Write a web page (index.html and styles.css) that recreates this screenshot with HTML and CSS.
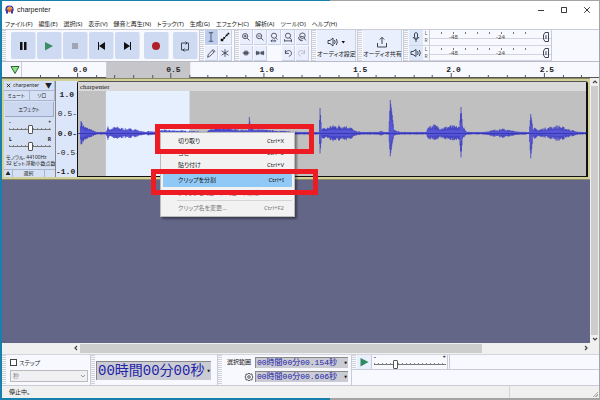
FILE: index.html
```html
<!DOCTYPE html>
<html lang="ja">
<head>
<meta charset="utf-8">
<title>charpenter</title>
<link rel="stylesheet" href="styles.css">
</head>
<body>
<div class="window">
  <header class="titlebar">
    <svg class="logo" viewBox="0 0 18 18"><circle cx="9" cy="9" r="6" fill="#f0a030"/><path d="M2 12V9a7 7 0 0 1 14 0v3" fill="none" stroke="#2a2ab0" stroke-width="2.4"/><path d="M2 9h4v8H2zM12 9h4v8h-4z" fill="#3038c0"/><path d="M5 12l2-3 2 5 2-5 2 3" fill="none" stroke="#e03020" stroke-width="1.6"/></svg>
    <h1 class="title">charpenter</h1>
    <div class="caption">
      <button aria-label="最小化"><svg viewBox="0 0 8 8"><path d="M1 4.5h6"/></svg></button>
      <button aria-label="最大化"><svg viewBox="0 0 8 8"><path d="M1.5 1.5h5v5h-5z"/></svg></button>
      <button aria-label="閉じる"><svg viewBox="0 0 8 8"><path d="M1.2 1.2l5.6 5.6M6.8 1.2L1.2 6.8"/></svg></button>
    </div>
  </header>

  <nav class="menubar">
    <button>ファイル(F)</button><button>編集(E)</button><button>選択(S)</button><button>表示(V)</button><button>録音と再生(N)</button><button>トラック(T)</button><button>生成(G)</button><button>エフェクト(C)</button><button>解析(A)</button><button>ツール(O)</button><button>ヘルプ(H)</button>
  </nav>

  <div class="toolbar">
    <div class="group transport">
      <button aria-label="一時停止"><svg viewBox="0 0 24 26"><path d="M9 9h2.5v8H9zM13 9h2.5v8H13z"/></svg></button>
      <button aria-label="再生"><svg viewBox="0 0 24 26"><path d="M8 9l8 4-8 4.500z" fill="#3d8c68"/></svg></button>
      <button aria-label="停止"><svg viewBox="0 0 24 26"><path d="M9 10h6v6H9z" fill="#a3a5b4"/></svg></button>
      <button aria-label="先頭へ"><svg viewBox="0 0 24 26"><path d="M9 9h1v8H9zM16 9v8l-6-4z"/></svg></button>
      <button aria-label="末尾へ"><svg viewBox="0 0 24 26"><path d="M15 9h1v8h-1zM9 9v8l6-4z"/></svg></button>
      <button class="record" aria-label="録音"><svg viewBox="0 0 24 26"><circle cx="12" cy="13" r="4" fill="#b0202c"/></svg></button>
      <button class="loop" aria-label="ループ"><svg viewBox="0 0 24 26"><path d="M11 17H8.500v-7H14M12.500 8.500L14 10l-1.500 1.500M13 10h2.500v7H10M11.500 15.500L10 17l1.500 1.500" fill="none" stroke="#333848" stroke-width=".9"/></svg></button>
    </div>
    <div class="group tools">
      <button class="on" aria-label="選択ツール"><svg viewBox="0 0 14 14"><path d="M4.500 2h5M7 2v10M4.500 12h5"/></svg></button>
      <button aria-label="エンベロープ"><svg viewBox="0 0 14 14"><path d="M3 10.500l3-1.500 2.500-4L11 3" stroke-width="1"/><path d="M2 9h3v3H2zM5 7h2v2H5zM8 4h2v2H8zM10 2h2v2h-2z" fill="#111" stroke="none"/></svg></button>
      <button aria-label="描画"><svg viewBox="0 0 14 14"><path d="M3 12l1-3.500L9.500 3l2 2L6 10.500zM8.500 4l2 2"/></svg></button>
      <button aria-label="マルチツール"><svg viewBox="0 0 14 14"><path d="M7 2.500v9M3 4.500l8 5M11 4.500l-8 5"/></svg></button>
    </div>
    <div class="group edit">
      <button aria-label="拡大"><svg viewBox="0 0 14 14"><circle cx="6" cy="6" r="3"/><path d="M8.300 8.300L11 11M4.500 6h3M6 4.500v3"/></svg></button>
      <button aria-label="縮小"><svg viewBox="0 0 14 14"><circle cx="6" cy="6" r="3"/><path d="M8.300 8.300L11 11M4.500 6h3"/></svg></button>
      <button aria-label="選択範囲に合わせる"><svg viewBox="0 0 14 14"><circle cx="7" cy="5.500" r="3"/><path d="M9 8l2 2M3.500 11.500h5M5 10l-1.500 1.500L5 13M7.500 10L9 11.500 7.500 13"/></svg></button>
      <button aria-label="全体を表示"><svg viewBox="0 0 14 14"><circle cx="7" cy="5.500" r="3"/><path d="M9 8l2 2M3 11.500h8M3 9.500v3M11 10v3"/></svg></button>
      <button aria-label="ズーム切替"><svg viewBox="0 0 14 14"><circle cx="7.500" cy="5.500" r="3.200"/><path d="M9.500 8l2 3M5 6.500h4M3 9l3 3M3 7c0 3 2 4 5 4"/></svg></button>
      <button aria-label="トリム"><svg viewBox="0 0 14 14"><path d="M3 7h8M5 5v4M6 4v6M7 5v4M8 4v6M9 5v4"/></svg></button>
      <button aria-label="無音化"><svg viewBox="0 0 14 14"><path d="M3 4.500v5M4.200 5v4M2 7h10M9.800 5v4M11 4.500v5M5.500 5v4M8.500 5v4"/></svg></button>
      <span class="blank"></span>
      <button aria-label="元に戻す"><svg viewBox="0 0 14 14"><path d="M4 3.500v4h4M4 7.500c1-5 8-4 7 .5-.3 1.500-1.500 2.500-3 2.800"/></svg></button>
      <button class="off" aria-label="やり直す"><svg viewBox="0 0 14 14"><path d="M10 3.500v4H6M10 7.500c-1-5-8-4-7 .5.300 1.500 1.500 2.500 3 2.800"/></svg></button>
    </div>
    <div class="group big">
      <button><svg viewBox="0 0 20 12"><path d="M2 4.500h2L7 2v8L4 7.500H2zM8.500 4q1.300 2 0 4M10.300 3q2 3 0 6"/><path d="M15.500 5h3.500l-1.700 2.500z" fill="#111" stroke="none"/></svg><span>オーディオ設定</span></button>
    </div>
    <div class="group big">
      <button><svg viewBox="0 0 20 12"><path d="M10 8V1.500M7.800 3.500L10 1.300l2.200 2.200M5.500 7v4h9V7"/></svg><span>オーディオ共有</span></button>
    </div>
    <div class="group meters">
      <div class="meter"><button aria-label="録音メーター"><svg viewBox="0 0 14 14"><path d="M5.500 3.500q1.500-2 3 0v4q-1.500 2-3 0zM4 7q3 5 6 0M7 9.500V12"/></svg></button><span class="lr"><i>L</i><i>R</i></span>
        <div class="scale"><span>-48</span><span>-24</span><svg viewBox="0 0 8 12"><path d="M3 1.500h3.500v9H3L1.500 8V4zM4 4v4"/></svg></div></div>
      <div class="meter"><button aria-label="再生メーター"><svg viewBox="0 0 14 14"><path d="M2 5.500h2L7 3.500v7L4 8.500H2zM8.500 5q1.300 2 0 4M10.300 4q2 3 0 6"/></svg></button><span class="lr"><i>L</i><i>R</i></span>
        <div class="scale"><span>-48</span><span>-24</span><svg viewBox="0 0 8 12"><path d="M3 1.500h3.500v9H3L1.500 8V4zM4 4v4"/></svg></div></div>
    </div>
  </div>

  <div class="ruler">
    <button class="pin" aria-label="再生ヘッド固定"><svg viewBox="0 0 10 10"><path d="M1 1.500h8L5 8.500z" fill="#8fe08a" stroke="#2c6a38"/></svg></button>
    <svg class="ruler-scale" id="ruler" viewBox="0 0 576 16" preserveAspectRatio="xMinYMin slice" role="img"></svg>
  </div>

  <main class="workspace">
    <div class="tracks">
      <section class="track">
        <div class="panel">
          <div class="row head"><button aria-label="閉じる"><svg viewBox="0 0 6 6"><path d="M1 1l4 4M5 1L1 5"/></svg></button><button class="name"><span>charpenter</span><b>▼</b></button></div>
          <div class="row"><button>ミュート</button><button>ソロ</button></div>
          <button class="effects">エフェクト</button>
          <label class="knob"><span><i>-</i><i>+</i></span><input type="range" aria-label="ゲイン"></label>
          <label class="knob"><span><i>L</i><i>R</i></span><input type="range" aria-label="パン"></label>
          <p>モノラル, 44100Hz<br>32 ビット浮動小数点数</p>
          <div class="row foot"><button aria-label="折りたたむ">▲</button><button>選択</button></div>
        </div>
        <div class="vscale"><b>1.0</b><span>0.5-</span><b>0.0-</b><span>-0.5-</span><b>-1.0</b></div>
        <div class="clip">
          <div class="clip-name">charpenter</div>
          <svg id="wave" viewBox="0 0 510 85" preserveAspectRatio="none" role="img" aria-label="波形"></svg>
        </div>
      </section>
    </div>
    <div class="vbar"><svg viewBox="0 0 8 8"><path d="M2 5l2-2 2 2"/></svg><div class="thumb"></div><svg viewBox="0 0 8 8"><path d="M2 3l2 2 2-2"/></svg></div>
  </main>
  <div class="hbar"><svg viewBox="0 0 8 8"><path d="M5 2L3 4l2 2"/></svg><div class="lane"><div class="thumb"></div></div><svg viewBox="0 0 8 8"><path d="M3 2l2 2-2 2"/></svg></div>

  <footer class="bottom">
    <div class="group step">
      <label><input type="checkbox">ステップ</label>
      <div class="unit"><select aria-label="単位" disabled><option>秒</option></select><svg viewBox="0 0 8 8"><path d="M2 3l2 2 2-2"/></svg></div>
    </div>
    <div class="group clock"><div class="time large"><span>00時間00分00秒</span><button aria-label="書式">▾</button></div></div>
    <div class="group range">
      <span class="range-label">選択範囲</span>
      <div class="time"><span>00時間00分00.154秒</span><button aria-label="書式">▾</button></div>
      <button class="gear" aria-label="設定"><svg viewBox="0 0 10 10"><path d="M5 1l1.200 1.200 1.800-.2.200 1.800L9 5l-.8 1.200L8 8l-1.800-.2L5 9 3.800 7.800 2 8l-.2-1.800L1 5l.8-1.200L2 2l1.800.2z"/><circle cx="5" cy="5" r="1.300"/></svg></button>
      <div class="time"><span>00時間00分00.606秒</span><button aria-label="書式">▾</button></div>
    </div>
    <div class="rest">
      <div class="group speed">
        <button aria-label="指定速度で再生"><svg viewBox="0 0 14 14"><path d="M3.500 3l8 4-8 4.500z" fill="#2f8a62"/></svg></button>
        <label class="knob"><span><i>-</i><i>+</i></span><input type="range" value="29" aria-label="再生速度"></label>
      </div>
      <div class="group filler"></div>
    </div>
  </footer>
  <div class="status"><span>停止中。</span><span></span><span class="grip"></span></div>

  <div class="context" role="menu">
    <button role="menuitem"><span>切り取り</span><span>Ctrl+X</span></button>
    <button role="menuitem"><span>コピー</span><span>Ctrl+C</span></button>
    <button role="menuitem"><span>貼り付け</span><span>Ctrl+V</span></button>
    <hr>
    <button role="menuitem" class="active"><span>クリップを分割</span><span>Ctrl+I</span></button>
    <button role="menuitem" class="red"><span>クリップをミュート/ミュート解除</span><span>Ctrl+F1</span></button>
    <hr>
    <button role="menuitem" disabled><span>クリップ名を変更...</span><span>Ctrl+F2</span></button>
  </div>
  <div class="mark mark-cut"></div>
  <div class="mark mark-split"></div>
</div>
<script src="script.js"></script>
</body>
</html>
```
FILE: styles.css
```css
* { box-sizing: border-box; }
body { margin: 0; font: 6px/10px "Noto Sans", "Noto Sans CJK JP", sans-serif; color: #222; font-feature-settings: "palt"; }
button, select, input { font: inherit; color: inherit; margin: 0; padding: 0; border: 0; background: none; font-feature-settings: inherit; }
button { display: block; white-space: nowrap; }
i { font-style: normal; }
svg { display: block; }
.window { position: relative; height: 100vh; display: flex; flex-direction: column; padding: 1px 1px 2px 2px; background: linear-gradient(90deg, #1880ac 0 55%, #a2a4a6 55%); overflow: hidden; }

.titlebar { display: flex; align-items: center; height: 17px; padding-left: 3px; gap: 3px; flex: none; background: #fff; }
.logo { width: 9px; height: 9px; }
.title { flex: 1; margin: 0; font: 7px/10px "Liberation Sans", sans-serif; }
.caption { display: flex; gap: 15px; padding-right: 8px; }
.caption svg { width: 8px; height: 8px; fill: none; stroke: #222; stroke-width: .9; }
.menubar { display: flex; gap: 6px; height: 11px; padding-left: 3px; flex: none; background: #fff; }

.toolbar { display: flex; height: 33px; flex: none; background: #f8f9fe; border-top: 1px solid #c9ccd6; border-bottom: 1px solid #b9bcc8; }
.group { display: flex; padding-left: 7px; border-right: 1px solid #c9ccd6; background: linear-gradient(#f8f9fe, #f8f9fe) 4px 0 no-repeat, repeating-linear-gradient(#d0d2da 0 1px, #f8f9fe 1px 2px); }
.toolbar svg { fill: none; stroke: #2c3144; stroke-width: .9; }
.transport { align-items: center; gap: 1px; padding: 0 1px 0 9px; }
.transport button { width: 25px; height: 27px; background: #cedaf1; border-radius: 2px; border-right: 1px solid #e2e8f6; }
.toolbar .transport svg { width: 24px; height: 26px; fill: #111; stroke: none; }
.transport .record, .transport .loop { margin-left: 3px; }
.tools, .edit { display: grid; gap: 1px; padding-right: 2px; align-content: center; }
.tools { grid-template-columns: repeat(2, 13px); padding-left: 5px; }
.edit { grid-template-columns: repeat(5, 13px); padding-left: 5px; }
.tools button, .edit button { height: 15px; background: #e9effc; border: 1px solid #c9d0e4; border-width: 0 1px 1px 0; }
.tools svg, .edit svg { width: 12px; height: 14px; }
.toolbar .tools .on { background: #bccdee; }
.edit .off svg { opacity: .3; }
.big { padding: 0 1px 0 5px; }
.big button { width: 39px; background: #e9effc; border-right: 1px solid #c9d0e4; }
.big svg { width: 20px; height: 12px; margin: 3px auto 1px; }
.meters { flex-direction: column; padding-left: 5px; }
.meter { display: flex; height: 16px; border-bottom: 1px solid #d2d5df; }
.meter button { width: 14px; background: #dde7fa; }
.meter svg { width: 14px; height: 14px; }
.lr { width: 6px; display: grid; font-size: 5px; line-height: 7px; text-align: center; color: #555; }
.scale { width: 122px; display: flex; padding: 1px 1px 0 0; line-height: 13px; border-left: 1px solid #c9ccd6; color: #444; background: repeating-linear-gradient(90deg, #777 0 1px, transparent 1px 12px) 11px 2px / 96px 2px no-repeat, linear-gradient(#d2d5df, #d2d5df) 0 8px / 100% 1px no-repeat; }
.scale span { width: 47px; text-align: center; }
.meter .scale svg { width: 8px; height: 12px; margin-left: auto; }

.ruler { display: flex; height: 16px; flex: none; background: #f8f9fe; border-bottom: 1px solid #555; }
.pin { width: 20px; padding-left: 8px; border-right: 1px solid #ccc; }
.pin svg { width: 10px; height: 10px; }
.ruler-scale { flex: 1; height: 16px; min-width: 0; font: bold 8px "Liberation Mono", monospace; }

.workspace { flex: 1; display: flex; min-height: 0; background: #646688; }
.tracks { flex: 1; min-width: 0; }
.track { display: flex; height: 102px; padding: 2px; background: #d3d19a; border: 1px solid #8a8b66; border-width: 1px 0; }
.panel { width: 51px; background: #d5e0f5; font-size: 5px; line-height: 7px; overflow: hidden; display: flex; flex-direction: column; }
.row { display: flex; height: 10px; border-bottom: 1px solid #aab6d0; }
.row button { flex: 1; border-right: 1px solid #aab6d0; }
.head button:first-child { flex: none; width: 9px; padding-left: 2px; border: 0; }
.head svg { width: 5px; height: 5px; stroke: #111; }
.row .name { display: flex; align-items: center; justify-content: space-between; padding-right: 2px; }
.name b { font-size: 7px; }
.effects { height: 15px; margin: 1px 1px 3px; background: #cbd8f0; border: 1px solid #9ba8c6; border-width: 0 1px 1px 0; }
.knob { display: block; }
.panel .knob { width: 42px; height: 17px; margin: 0 5px; }
.knob span { display: flex; justify-content: space-between; height: 5px; line-height: 5px; font-weight: 700; }
input[type=range] { appearance: none; display: block; width: 100%; height: 9px; background: linear-gradient(#777, #777) 0 4px / 100% 1px no-repeat, repeating-linear-gradient(90deg, #888 0 1px, transparent 1px 4px) 0 3px / 100% 1px no-repeat; }
input[type=range]::-webkit-slider-thumb { appearance: none; width: 5px; height: 9px; border: 1px solid #555; border-radius: 1px; background: #fff; }
.panel p { margin: 0; padding-left: 2px; line-height: 6px; white-space: nowrap; }
.foot { margin-top: auto; border-top: 1px solid #aab6d0; border-bottom: 0; height: 8px; }
.foot button:first-child { flex: none; width: 9px; }
.foot button:last-child { margin-right: 10px; }
.vscale { width: 22px; display: flex; flex-direction: column; justify-content: space-between; padding: 9px 0 0; background: #dce6fa; border-left: 1px solid #888; font: 8px/10px "Liberation Mono", monospace; text-align: right; }
.vscale b:first-child, .vscale b:last-child { padding-right: 3px; }
.clip { flex: 1; min-width: 0; display: flex; flex-direction: column; background: #c0c0c0; border: 1px solid #111; border-width: 1px 2px 1px 1px; border-top-color: #555; border-radius: 3px 3px 0 0; }
.clip-name { height: 9px; padding-left: 2px; background: #d9d9d9; font: 7px/10px "Liberation Serif", serif; color: #111; }
#wave { width: 100%; flex: 1; min-height: 0; }
.vbar { width: 9px; display: flex; flex-direction: column; align-items: center; background: #f0f0f0; }
.vbar .thumb { flex: 1; width: 7px; background: #cdcdcd; }
.vbar svg, .hbar svg { width: 8px; height: 8px; fill: none; stroke: #444; stroke-width: 1.2; }
.hbar { display: flex; height: 11px; flex: none; background: #f0f0f0; padding: 1px 9px 1px 70px; }
.lane { flex: 1; display: flex; }
.hbar .thumb { width: 80%; background: #cdcdcd; }

.bottom { display: flex; height: 31px; flex: none; background: #f8f9fe; border-top: 1px solid #d2d5df; }
.step { width: 89px; flex-direction: column; gap: 3px; padding: 3px 3px 0 8px; }
.step label { display: flex; align-items: center; gap: 2px; height: 9px; }
.step input { appearance: none; width: 7px; height: 7px; border: 1px solid #444; background: #fff; }
.unit { display: flex; align-items: center; width: 78px; height: 12px; border: 1px solid #bbb; background: #f0f0f2; }
.unit select { flex: 1; height: 10px; appearance: none; padding-left: 2px; color: #888; opacity: 1; }
.unit svg { width: 8px; height: 8px; fill: none; stroke: #999; }
.clock { width: 127px; padding: 6px 6px 6px 5px; }
.time { display: flex; align-items: center; justify-content: space-between; background: #cacbd3; border: 1px solid #8a8a8a; border-width: 1px 0 0 1px; color: #2224a8; font-family: "Liberation Mono", "Noto Sans CJK JP", monospace; font-size: 8px; line-height: 10px; padding-left: 1px; font-feature-settings: normal; white-space: nowrap; }
.time button { color: #111; width: 5px; font-size: 7px; }
.large { width: 116px; height: 19px; font-size: 14px; line-height: 18px; }
.range { width: 134px; display: grid; grid-template-columns: 27px 93px; grid-auto-rows: 11px; gap: 3px 1px; align-content: start; padding: 2px 2px 2px 9px; }
.range-label { line-height: 11px; white-space: nowrap; color: #111; }
.gear { justify-self: end; }
.gear svg { width: 10px; height: 10px; fill: none; stroke: #333; stroke-width: .8; }
.rest { flex: 1; display: flex; height: 15px; border-bottom: 1px solid #c9ccd6; }
.speed { width: 96px; padding-left: 5px; }
.speed button { width: 15px; background: #e9effc; border-right: 1px solid #c9ccd6; }
.speed svg { width: 14px; height: 14px; }
.speed .knob { width: 72px; margin-left: 2px; }
.filler { flex: 1; padding-left: 0; background: linear-gradient(#c9ccd6, #c9ccd6) 1px 0 / 1px 100% no-repeat; border-right: 0; }
.status { display: flex; height: 13px; flex: none; background: #f0f0f0; border-top: 1px solid #c9ccd6; line-height: 13px; }
.status span:first-child { width: 85%; padding-left: 7px; }
.status span:nth-child(2) { flex: 1; border-left: 1px solid #d5d5d5; }
.grip { width: 7px; margin: 5px 1px 0 0; height: 6px; background: linear-gradient(135deg, transparent 55%, #aaa 55% 65%, transparent 65% 75%, #aaa 75% 85%, transparent 85%); }

.context { position: absolute; left: 160px; top: 132px; width: 135px; padding: 2px; background: #f2f2f2; border: 1px solid #bbb; box-shadow: 2px 2px 2px rgba(0, 0, 0, .4); }
.context button { width: 100%; height: 12px; padding: 0 8px 0 15px; display: flex; justify-content: space-between; line-height: 12px; }
.context hr { margin: 1px 0 1px 14px; border: 0; border-top: 1px solid #d5d5d5; }
.context .active { background: #90c8f6; color: #111; height: 13px; }
.context .red { color: #a03038; }
.context :disabled { color: #777; }
.mark { position: absolute; border: 5px solid #ed1c24; }
.mark-cut { left: 155px; top: 124px; width: 159px; height: 30px; }
.mark-split { left: 151px; top: 169px; width: 167px; height: 26px; }
```
FILE: script.js
```js
const NS = "http://www.w3.org/2000/svg";
function add(parent, name, attrs, text) {
  const el = document.createElementNS(NS, name);
  for (const key in attrs) el.setAttribute(key, attrs[key]);
  if (text) el.textContent = text;
  parent.appendChild(el);
}

// Time ruler: half-second labels with five subdivisions each.
const ruler = document.getElementById("ruler");
const HALF = 93.2;
add(ruler, "rect", { x: 84, y: 0, width: 84, height: 16, fill: "#c6c6ca" });
for (let i = -3; i < 28; i++) {
  const x = Math.round(55 + i * HALF / 5) + 0.5;
  add(ruler, "path", { d: `M${x} ${i % 5 ? 13 : 11}V16`, stroke: "#555" });
}
for (let i = 0; i < 6; i++) {
  add(ruler, "text", { x: 58 + i * HALF, y: 10, "text-anchor": "middle", fill: "#222" }, (i / 2).toFixed(1));
}

// Waveform envelope: [position, height above, height below].
const env = [
  [2, 0, 0], [3, 12, 11], [4.5, 9, 10], [7, 6, 6], [12, 4, 4], [18, 1, 1], [28, 1, 1], [30, 6, 6], [32, 4, 3],
  [38, 6, 5], [48, 4, 4], [57, 4, 4], [62, 2, 2], [68, 1, 1], [71, 2, 2], [77, 1, 1], [84, 3, 2], [112, 2, 2],
  [127, 1, 1], [136, 4, 4], [147, 5, 4], [162, 3, 3], [171, 3, 3], [172, 16, 10], [173.5, 4, 4], [188, 3, 3],
  [204, 2, 2], [222, 1, 1], [242, 1, 1], [243, 25, 20], [244.5, 4, 5], [250, 5, 4], [254, 7, 7], [267, 7, 7],
  [273, 6, 6], [278, 2, 2], [285, 1, 1], [300, 1, 1], [304, 2, 2], [308, 1, 1], [312, 1, 1], [313.5, 33, 23],
  [315.5, 18, 10], [317, 3, 2], [325, 1, 1], [350, 1, 1], [351, 6, 6], [357, 8, 6], [365, 5, 5], [374, 7, 6],
  [383, 6, 6], [384.5, 26, 24], [386, 8, 6], [390, 1, 1], [408, 1, 1], [417, 3, 3], [427, 4, 4], [437, 2, 2],
  [447, 1, 1], [453, 1, 1], [454.5, 19, 25], [456.5, 6, 6], [461, 3, 3], [470, 5, 4], [482, 7, 7], [492, 4, 4],
  [502, 1, 1], [510, 1, 1]
];
function level(x, side) {
  for (let i = 1; i < env.length; i++) {
    const [a, b] = [env[i - 1], env[i]];
    if (x <= b[0]) return a[side] + (b[side] - a[side]) * (x - a[0]) / (b[0] - a[0]);
  }
  return 1;
}
let seed = 7;
const noise = () => (seed = (seed * 16807) % 2147483647) / 2147483647;
const mid = 42;
let outer = "", inner = "";
for (let x = 2; x < 510; x += 0.5) {
  const up = level(x, 1), down = level(x, 2);
  const k = up > 9 ? 1 : 0.55 + noise() * 0.6;
  outer += `M${x} ${(mid - up * k).toFixed(1)}V${(mid + down * k + 0.4).toFixed(1)}`;
  inner += `M${x} ${(mid - up * 0.45).toFixed(1)}V${(mid + down * 0.45).toFixed(1)}`;
}
const wave = document.getElementById("wave");
add(wave, "rect", { x: 28, y: 0, width: 84, height: 85, fill: "#e6effe" });
add(wave, "path", { d: outer, stroke: "#3c3cc4", "stroke-width": 0.8 });
add(wave, "path", { d: inner, stroke: "#5c5cdc", "stroke-width": 0.6 });
add(wave, "path", { d: `M0 ${mid}.5H510`, stroke: "#3030b0", "stroke-width": 0.8 });
```
